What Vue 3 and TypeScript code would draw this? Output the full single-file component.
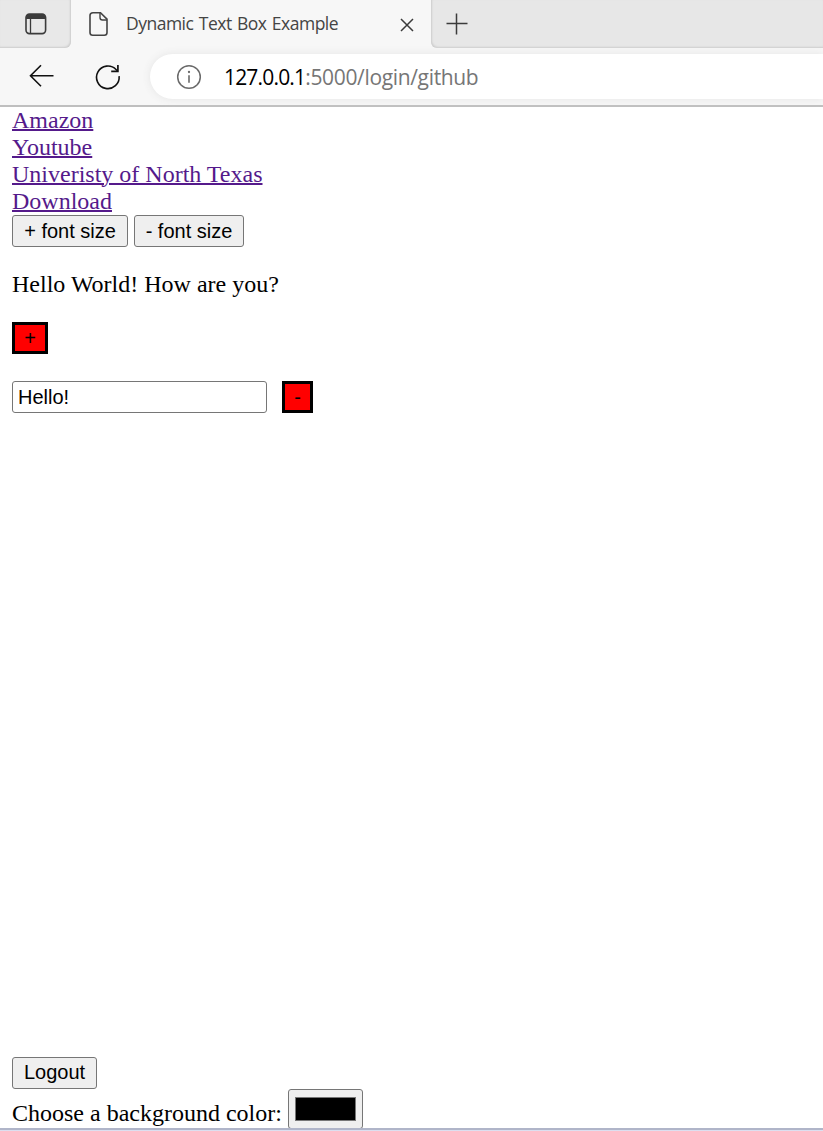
<script setup lang="ts">
import { ref } from 'vue'

const links: string[] = ['Amazon', 'Youtube', 'Univeristy of North Texas', 'Download']
const message = ref('Hello!')
</script>

<template>
  <div class="window">
    <header class="tabs">
      <div class="workspace">
        <svg width="22" height="22" viewBox="0 0 22 22">
          <rect x="1" y="1" width="19.6" height="19.6" rx="3.5" fill="none" stroke="#3b3b3b" stroke-width="1.6" />
          <path d="M1 6V4.5A3.5 3.5 0 0 1 4.500 1H17A3.500 3.500 0 0 1 20.600 4.500V6Z" fill="#3b3b3b" />
          <path d="M5.500 6V20" stroke="#3b3b3b" stroke-width="1.300" />
        </svg>
      </div>
      <div class="tab">
        <svg class="page-icon" width="20" height="26" viewBox="0 0 20 26">
          <path d="M4 1.700H11.500L18 8.200V21.500Q18 24.200 15.300 24.200H3.700Q1 24.200 1 21.500V4.400Q1 1.700 4 1.700Z" fill="none" stroke="#444" stroke-width="1.600" />
          <path d="M11 1.700V6.500Q11 9 13.500 9H18" fill="none" stroke="#444" stroke-width="1.400" />
        </svg>
        <span class="tab-title">Dynamic Text Box Example</span>
        <svg class="close" width="14" height="14" viewBox="0 0 14 14">
          <path d="M1 1L13 13M13 1L1 13" stroke="#3b3b3b" stroke-width="1.500" />
        </svg>
      </div>
      <div class="strip">
        <svg width="22" height="22" viewBox="0 0 22 22">
          <path d="M.5 10.500H21.500M10.500 .5V21.500" stroke="#3b3b3b" stroke-width="1.500" />
        </svg>
      </div>
    </header>

    <nav class="toolbar">
      <svg class="back" width="26" height="24" viewBox="0 0 26 24">
        <path d="M12 1.300L1.500 11.700L12 22.200M1.500 11.700H24.500" fill="none" stroke="#111" stroke-width="1.600" />
      </svg>
      <svg class="reload" width="28" height="28" viewBox="0 0 28 28">
        <path d="M25.100 13.200A11.300 11.300 0 1 1 22 6.500L23.700 8.200" fill="none" stroke="#111" stroke-width="1.600" />
        <path d="M23.900 2V8.400H17.200" fill="none" stroke="#111" stroke-width="1.700" />
      </svg>
      <div class="address">
        <svg width="26" height="26" viewBox="0 0 26 26">
          <circle cx="13" cy="13" r="11.300" fill="none" stroke="#6a6a6a" stroke-width="1.500" />
          <path d="M13 11.300V18.800" stroke="#6a6a6a" stroke-width="1.600" />
          <circle cx="13" cy="8" r="1.150" fill="#6a6a6a" />
        </svg>
        <span class="url"><b>127.0.0.1</b>:5000/login/github</span>
      </div>
    </nav>

    <main class="page">
      <div v-for="link in links" :key="link" class="link-row"><a href="#">{{ link }}</a></div>
      <div class="row">
        <button class="plain bigger">+ font size</button>
        <button class="plain smaller">- font size</button>
      </div>
      <p class="greeting">Hello World! How are you?</p>
      <div class="row"><button class="red add">+</button></div>
      <div class="row entry">
        <input v-model="message" type="text" class="textbox">
        <button class="red remove">-</button>
      </div>
      <footer class="bottom">
        <button class="plain logout">Logout</button>
        <div class="color-row">
          <span class="color-label">Choose a background color:</span>
          <button class="picker" aria-label="Background color"><span class="swatch"></span></button>
        </div>
      </footer>
    </main>
    <div class="edge"></div>
  </div>
</template>

<style>
body { margin: 0; overflow: hidden; background: #fff; }
</style>

<style scoped>
* { box-sizing: border-box; }
svg { display: block; flex: none; }
.window { height: 1131px; display: flex; flex-direction: column; overflow: hidden; background: #fff; }
.tabs { height: 48px; flex: none; display: flex; background: #f7f7f7; }
.workspace { width: 71px; padding: 13px 0 0 25px; background: #e8e8e8; border-radius: 0 0 6px 0; box-shadow: inset -1px -1px 2px #ccc; }
.tab { width: 360px; display: flex; align-items: flex-start; background: #f7f7f7; border-radius: 7px 7px 0 0; }
.strip { flex: 1; padding: 13px 0 0 15px; background: #e7e7e7; border-radius: 0 0 0 6px; box-shadow: inset 1px -1px 2px #ccc; }
.page-icon { margin: 11px 0 0 18px; }
.tab-title { width: 265px; margin-left: 17px; font: 17.5px/47px "Open Sans", "Noto Sans", sans-serif; letter-spacing: -.5px; word-spacing: 1.3px; color: #444; white-space: nowrap; }
.close { margin: 18px 0 0 9px; }
.toolbar { height: 59px; flex: none; display: flex; padding-top: 6px; background: #f7f7f7; border-bottom: 2px solid #bfbfbf; }
.back { margin: 10px 0 0 29px; }
.reload { margin: 9px 0 0 39px; }
.address { flex: 1; height: 45px; margin-left: 28px; padding-left: 26px; display: flex; align-items: center; border-radius: 23px 0 0 23px; background: #fff; box-shadow: 0 0 8px #e5e5e5; }
.url { margin-left: 22px; padding-top: 1px; font: 21px/45px "Open Sans", "Noto Sans", sans-serif; letter-spacing: -.34px; color: #767676; white-space: nowrap; }
.url b { font-weight: 400; letter-spacing: -.82px; color: #000; }
.page { flex: 1; min-height: 0; display: flex; flex-direction: column; padding-left: 12px; font: 24px/27px "Liberation Serif", serif; color: #000; }
.edge { height: 3px; flex: none; background: #dcdff0; border-top: 2px solid #b0b5c9; }
.link-row { height: 27px; flex: none; }
.link-row a { color: #551a8b; text-decoration: underline; text-decoration-thickness: 2px; }
.row { height: 32px; flex: none; display: flex; }
button, input { height: 32px; margin: 0; padding: 0; font: 20px/24px "Liberation Sans", Arial, sans-serif; color: #000; }
.plain { border: 1px solid #767676; border-radius: 3px; background: #efefef; }
.bigger { width: 116px; }
.smaller { width: 110px; margin-left: 6px; }
.greeting { height: 27px; flex: none; margin: 24px 0; }
.red { border: 3px solid #000; background: red; }
.add { width: 36px; }
.entry { margin-top: 27px; }
.textbox { width: 255px; padding: 0 5px; border: 1px solid #767676; border-radius: 3px; background: #fff; outline: none; }
.remove { width: 31px; margin-left: 15px; }
.bottom { margin-top: auto; }
.logout { display: block; width: 85px; padding-bottom: 2px; }
.color-row { height: 39px; display: flex; }
.color-label { width: 270px; padding-top: 11px; white-space: nowrap; }
.picker { width: 75px; height: 40px; margin-left: 6px; padding: 7px 6px; border: 1px solid #767676; border-radius: 3px; background: #efefef; }
.swatch { display: block; height: 24px; border: 1px solid #777; background: #000; }
</style>
